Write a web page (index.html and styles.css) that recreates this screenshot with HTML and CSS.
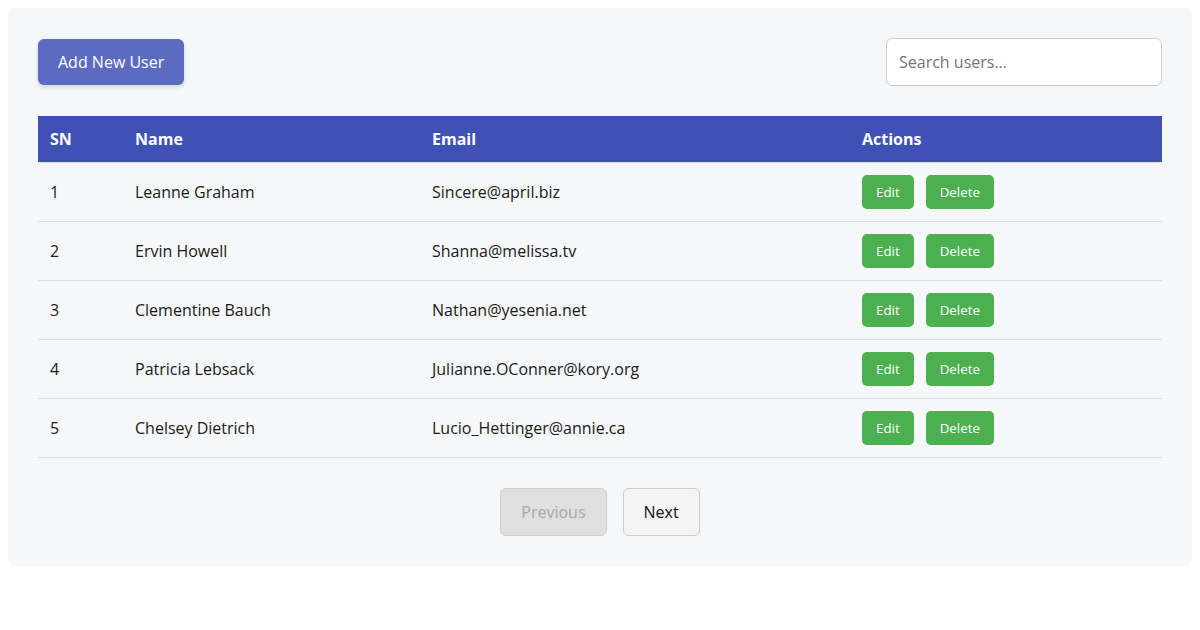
FILE: index.html
```html
<!DOCTYPE html>
<html lang="en">
<head>
<meta charset="utf-8">
<title>Users</title>
<link rel="stylesheet" href="styles.css">
</head>
<body>
<div class="panel">
  <div class="toolbar">
    <button class="btn-add">Add New User</button>
    <input class="search" type="text" placeholder="Search users...">
  </div>
  <table class="users">
    <thead>
      <tr><th class="c-sn">SN</th><th class="c-name">Name</th><th class="c-email">Email</th><th class="c-act">Actions</th></tr>
    </thead>
    <tbody>
      <tr><td>1</td><td>Leanne Graham</td><td>Sincere@april.biz</td><td><div class="acts"><button class="btn-g">Edit</button><button class="btn-g">Delete</button></div></td></tr>
      <tr><td>2</td><td>Ervin Howell</td><td>Shanna@melissa.tv</td><td><div class="acts"><button class="btn-g">Edit</button><button class="btn-g">Delete</button></div></td></tr>
      <tr><td>3</td><td>Clementine Bauch</td><td>Nathan@yesenia.net</td><td><div class="acts"><button class="btn-g">Edit</button><button class="btn-g">Delete</button></div></td></tr>
      <tr><td>4</td><td>Patricia Lebsack</td><td>Julianne.OConner@kory.org</td><td><div class="acts"><button class="btn-g">Edit</button><button class="btn-g">Delete</button></div></td></tr>
      <tr><td>5</td><td>Chelsey Dietrich</td><td>Lucio_Hettinger@annie.ca</td><td><div class="acts"><button class="btn-g">Edit</button><button class="btn-g">Delete</button></div></td></tr>
    </tbody>
  </table>
  <div class="pager">
    <button class="pg" disabled>Previous</button>
    <button class="pg">Next</button>
  </div>
</div>
</body>
</html>
```

FILE: styles.css
```css
* { box-sizing: border-box; }
body {
  margin: 8px;
  font-family: "Open Sans", "Noto Sans", sans-serif;
  color: #1a1a1a;
  background: #fff;
}
.panel {
  background: #f6f7f9;
  border-radius: 8px;
  padding: 30px;
}
.toolbar {
  display: flex;
  justify-content: space-between;
  align-items: center;
  margin-bottom: 30px;
}
.btn-add {
  font-family: inherit;
  font-size: 16px;
  line-height: 22px;
  color: #fff;
  background: #5c6bc0;
  border: none;
  border-radius: 6px;
  padding: 12px 20px;
  box-shadow: 0 2px 4px rgba(0,0,0,0.15);
}
.search {
  width: 276px;
  height: 48px;
  font-family: inherit;
  font-size: 16px;
  padding: 0 12px;
  border: 1px solid #ccc;
  border-radius: 6px;
  background: #fff;
  color: #333;
}
.search::placeholder { color: #757575; }
.users {
  width: 100%;
  border-collapse: collapse;
  font-size: 16px;
}
.users th {
  background: #3f51b5;
  color: #fff;
  font-weight: 700;
  text-align: left;
  padding: 12px;
  line-height: 22px;
  border-bottom: 1px solid #ddd;
}
.users td {
  padding: 12px;
  line-height: 22px;
  height: 59px;
  border-bottom: 1px solid #ddd;
}
.c-sn { width: 85px; }
.c-name { width: 297px; }
.c-email { width: 430px; }
.acts { display: flex; gap: 12px; }
.btn-g {
  font-family: inherit;
  font-size: 13.333px;
  line-height: 18px;
  color: #fff;
  background: #4caf50;
  border: none;
  border-radius: 5px;
  padding: 8px 14px;
}
.pager {
  display: flex;
  justify-content: center;
  gap: 16px;
  margin-top: 30px;
}
.pg {
  font-family: inherit;
  font-size: 16px;
  line-height: 22px;
  padding: 12px 20px;
  border: 1px solid #ccc;
  border-radius: 6px;
  background: #f5f5f5;
  color: #111;
}
.pg:disabled {
  background: #e0e0e0;
  color: #a8a8a8;
}
```
